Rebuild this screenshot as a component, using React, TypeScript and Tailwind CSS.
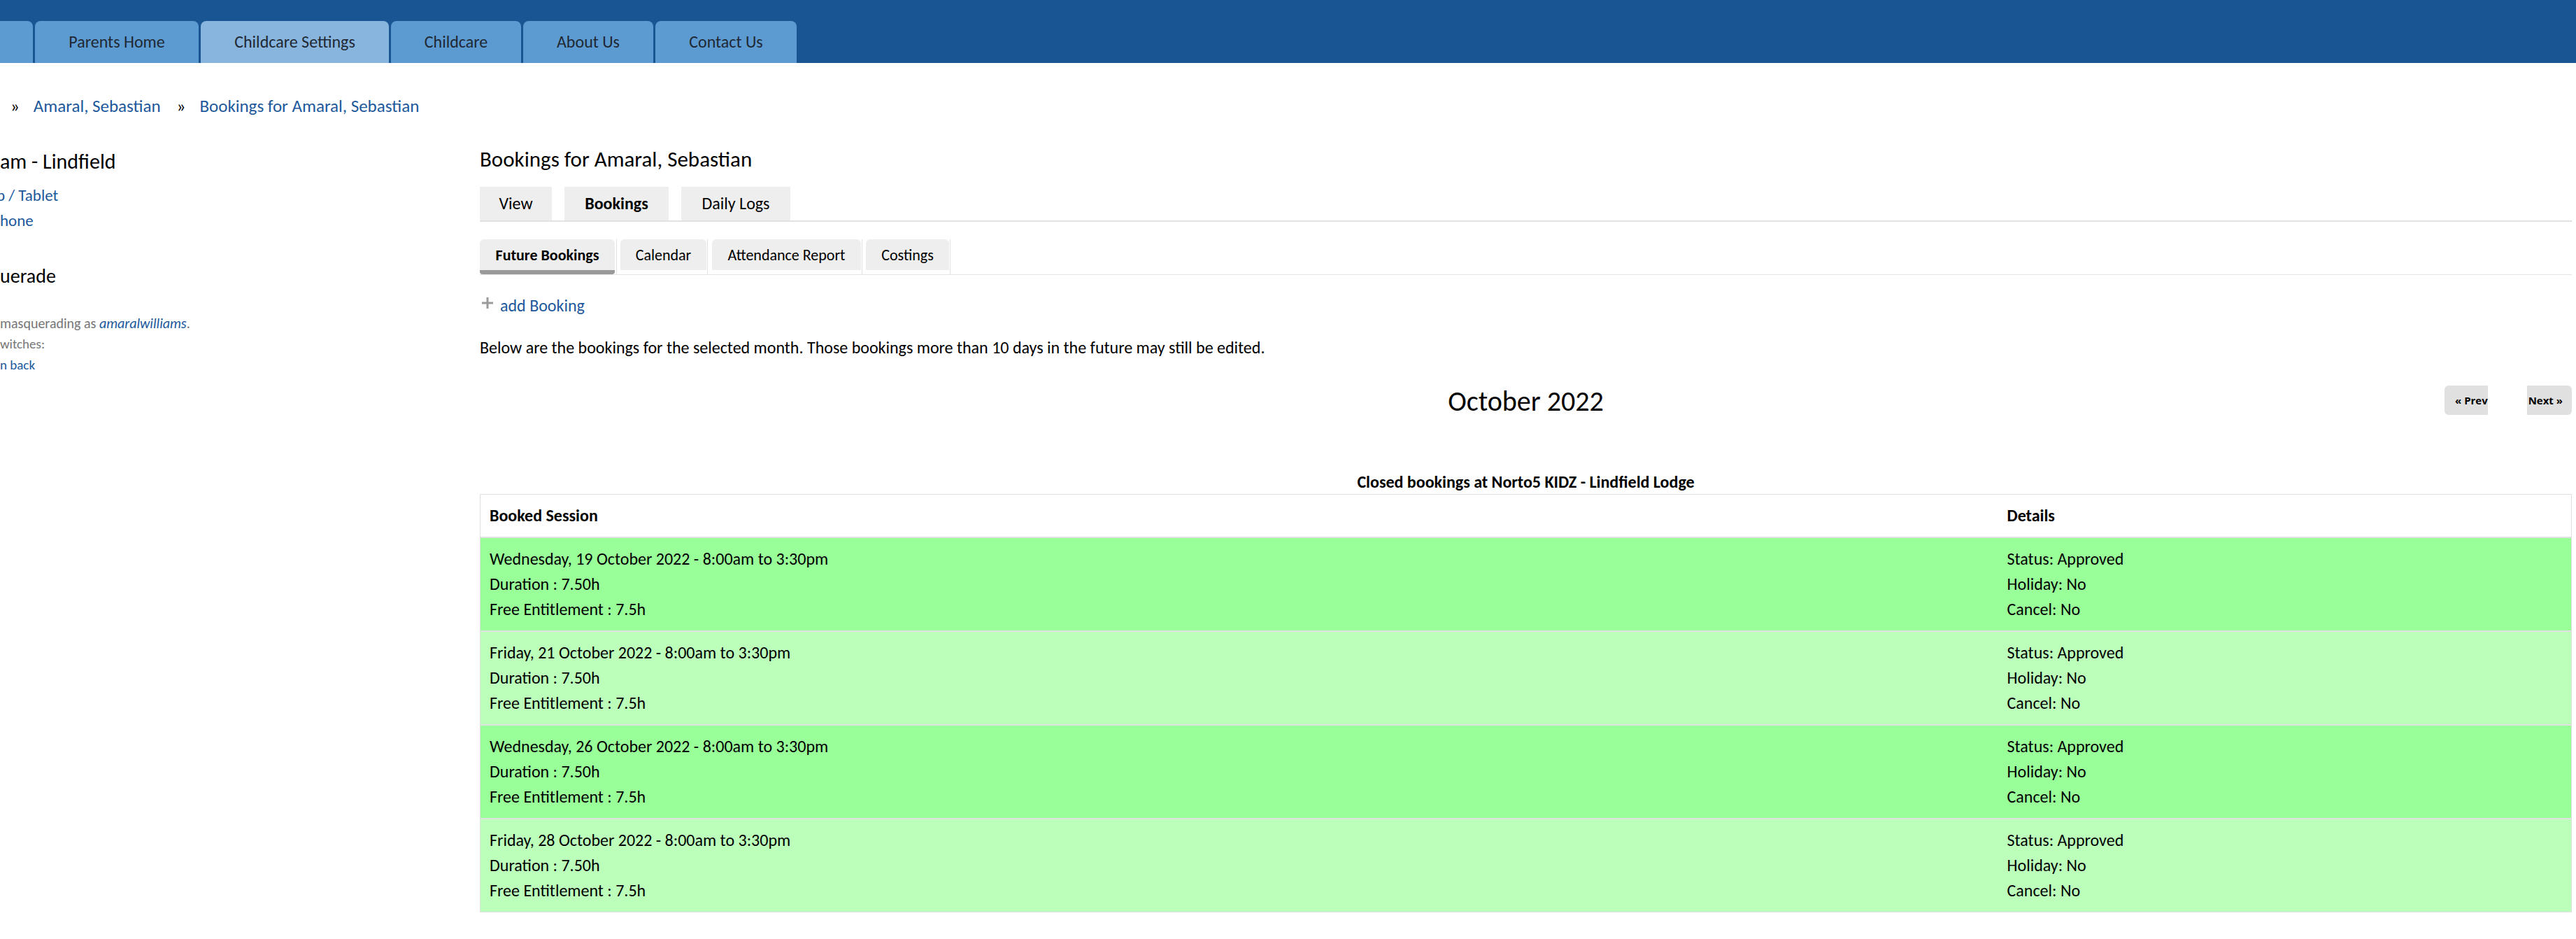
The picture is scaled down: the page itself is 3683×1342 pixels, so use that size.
import React from "react";

const navTabs = [
  { label: "Parents Home", cls: "w-[234px] bg-[#5c9bd1]" },
  { label: "Childcare Settings", cls: "w-[269px] bg-[#87b5de]" },
  { label: "Childcare", cls: "w-[186px] bg-[#5c9bd1]" },
  { label: "About Us", cls: "w-[186px] bg-[#5c9bd1]" },
  { label: "Contact Us", cls: "w-[202px] bg-[#5c9bd1]" },
];

const rows = [
  { date: "Wednesday, 19 October 2022 - 8:00am to 3:30pm", bg: "bg-[#99ff99]" },
  { date: "Friday, 21 October 2022 - 8:00am to 3:30pm", bg: "bg-[#bbffbb]" },
  { date: "Wednesday, 26 October 2022 - 8:00am to 3:30pm", bg: "bg-[#99ff99]" },
  { date: "Friday, 28 October 2022 - 8:00am to 3:30pm", bg: "bg-[#bbffbb]" },
];

function SideLine({ cls, children }: { cls: string; children: React.ReactNode }) {
  return <div className={`${cls} flex items-center whitespace-nowrap`}>{children}</div>;
}

export default function App() {
  return (
    <div className="min-h-[1342px] w-[3683px] bg-white text-black font-[Carlito,Calibri,Lato,sans-serif] overflow-hidden">
      {/* top nav */}
      <div className="h-[90px] bg-[#1a5593] flex items-end">
        <div className="flex gap-[3px] h-[60px]">
          <div className="w-[47px] rounded-tr-[8px] bg-[#5c9bd1]" />
          {navTabs.map((t) => (
            <div
              key={t.label}
              className={`${t.cls} rounded-t-[8px] flex items-center justify-center text-[24px] text-[#1f2833]`}
            >
              {t.label}
            </div>
          ))}
        </div>
      </div>

      {/* breadcrumb */}
      <div className="mt-[42px] h-[40px] flex items-center pl-[15px] text-[25px] text-[#20589b] whitespace-nowrap">
        <span className="text-black">»</span>
        <span className="ml-[20px]">Amaral, Sebastian</span>
        <span className="ml-[23px] text-black">»</span>
        <span className="ml-[20px]">Bookings for Amaral, Sebastian</span>
      </div>

      <div className="flex">
        {/* sidebar (its left part lies beyond the window edge) */}
        <div className="w-[686px] shrink-0 flex flex-col overflow-hidden">
          <SideLine cls="mt-[38px] h-[40px] text-[30px]">am - Lindfield</SideLine>
          <SideLine cls="mt-[11px] h-[36px] text-[23px] text-[#20589b]">
            <span className="-ml-[5px]">p / Tablet</span>
          </SideLine>
          <SideLine cls="h-[36px] text-[23px] text-[#20589b]">hone</SideLine>
          <SideLine cls="mt-[42px] h-[40px] text-[28px]">uerade</SideLine>
          <SideLine cls="mt-[32px] h-[30px] text-[20px] text-[#777777]">
            <span>
              masquerading as <i className="text-[#20589b]">amaralwilliams</i>.
            </span>
          </SideLine>
          <SideLine cls="h-[30px] text-[19px] text-[#777777]">witches:</SideLine>
          <SideLine cls="h-[30px] text-[19px] text-[#20589b]">n back</SideLine>
        </div>

        {/* main */}
        <div className="flex-1 pr-[6px]">
          <div className="mt-[35px] h-[40px] flex items-center text-[31px] whitespace-nowrap">
            Bookings for Amaral, Sebastian
          </div>

          {/* primary tabs */}
          <div className="mt-[20px] flex gap-[18px] border-b-2 border-[#e2e2e2]">
            <div className="w-[103px] h-[48px] bg-[#eeeeee] flex items-center justify-center text-[24px]">View</div>
            <div className="w-[149px] h-[48px] bg-[#eeeeee] flex items-center justify-center text-[24px] font-bold">Bookings</div>
            <div className="w-[156px] h-[48px] bg-[#eeeeee] flex items-center justify-center text-[24px]">Daily Logs</div>
          </div>

          {/* secondary tabs */}
          <div className="mt-[25px] flex items-start border-b border-[#e3e3e3] h-[51px]">
            <div className="flex h-[50px] border-r border-[#e2e2e2] pr-[2px] mr-[5px]">
              <div className="w-[193px] h-[50px] bg-[#eeeeee] rounded-t-[6px] rounded-b-[4px] border-b-[6px] border-[#999999] flex items-center justify-center text-[22px] font-bold">
                Future Bookings
              </div>
            </div>
            <div className="flex h-[50px] border-r border-[#e2e2e2] pr-[1px] mr-[6px]">
              <div className="w-[123px] h-[44px] bg-[#eeeeee] rounded-t-[6px] flex items-center justify-center text-[22px]">Calendar</div>
            </div>
            <div className="flex h-[50px] border-r border-[#e2e2e2] pr-[1px] mr-[5px]">
              <div className="w-[213px] h-[44px] bg-[#eeeeee] rounded-t-[6px] flex items-center justify-center text-[22px]">Attendance Report</div>
            </div>
            <div className="flex h-[50px] border-r border-[#e2e2e2] pr-[1px]">
              <div className="w-[119px] h-[44px] bg-[#eeeeee] rounded-t-[6px] flex items-center justify-center text-[22px]">Costings</div>
            </div>
          </div>

          {/* add booking */}
          <div className="mt-[26px] h-[36px] flex items-center text-[24px] whitespace-nowrap">
            <svg width="18" height="18" viewBox="0 0 18 18" className="ml-[2px] mr-[9px] -mt-[8px]">
              <rect x="7.5" y="1" width="3" height="16" fill="#9a9a9a" />
              <rect x="1" y="7.5" width="16" height="3" fill="#9a9a9a" />
            </svg>
            <span className="text-[#20589b]">add Booking</span>
          </div>

          <div className="mt-[24px] h-[36px] flex items-center text-[24px] whitespace-nowrap">
            Below are the bookings for the selected month. Those bookings more than 10 days in the future may still be edited.
          </div>

          {/* month header */}
          <div className="mt-[35px] h-[42px] grid grid-cols-[1fr_auto_1fr] items-center">
            <div />
            <div className="text-[40px] leading-none pt-[4px] whitespace-nowrap">October 2022</div>
            <div className="flex justify-end font-['Open_Sans',sans-serif] font-bold text-[15px] text-black">
              <div className="w-[62px] h-[42px] bg-[#e0e0e0] rounded-l-[6px] flex items-center pl-[15px] overflow-hidden whitespace-nowrap">
                <span className="shrink-0">« Prev</span>
              </div>
              <div className="w-[56px]" />
              <div className="w-[64px] h-[42px] bg-[#e0e0e0] rounded-r-[6px] flex items-center justify-end pr-[13px] overflow-hidden whitespace-nowrap">
                <span className="shrink-0">Next »</span>
              </div>
            </div>
          </div>

          {/* caption */}
          <div className="mt-[84px] h-[26px] flex items-center justify-center text-[24px] font-bold whitespace-nowrap">
            Closed bookings at Norto5 KIDZ - Lindfield Lodge
          </div>

          {/* table */}
          <div className="mt-[4px] border border-[#e0e0e0] text-[24px]">
            <div className="grid grid-cols-[2171fr_820fr] h-[60px] items-center font-bold bg-white">
              <div className="pl-[13px]">Booked Session</div>
              <div className="pl-[13px]">Details</div>
            </div>
            {rows.map((r) => (
              <div key={r.date} className={`grid grid-cols-[2171fr_820fr] border-t-2 border-[#e0e0e0] ${r.bg} py-[12px] leading-[36px]`}>
                <div className="pl-[13px] whitespace-nowrap">
                  <div>{r.date}</div>
                  <div>Duration : 7.50h</div>
                  <div>Free Entitlement : 7.5h</div>
                </div>
                <div className="pl-[13px] whitespace-nowrap">
                  <div>Status: Approved</div>
                  <div>Holiday: No</div>
                  <div>Cancel: No</div>
                </div>
              </div>
            ))}
          </div>
        </div>
      </div>
    </div>
  );
}
